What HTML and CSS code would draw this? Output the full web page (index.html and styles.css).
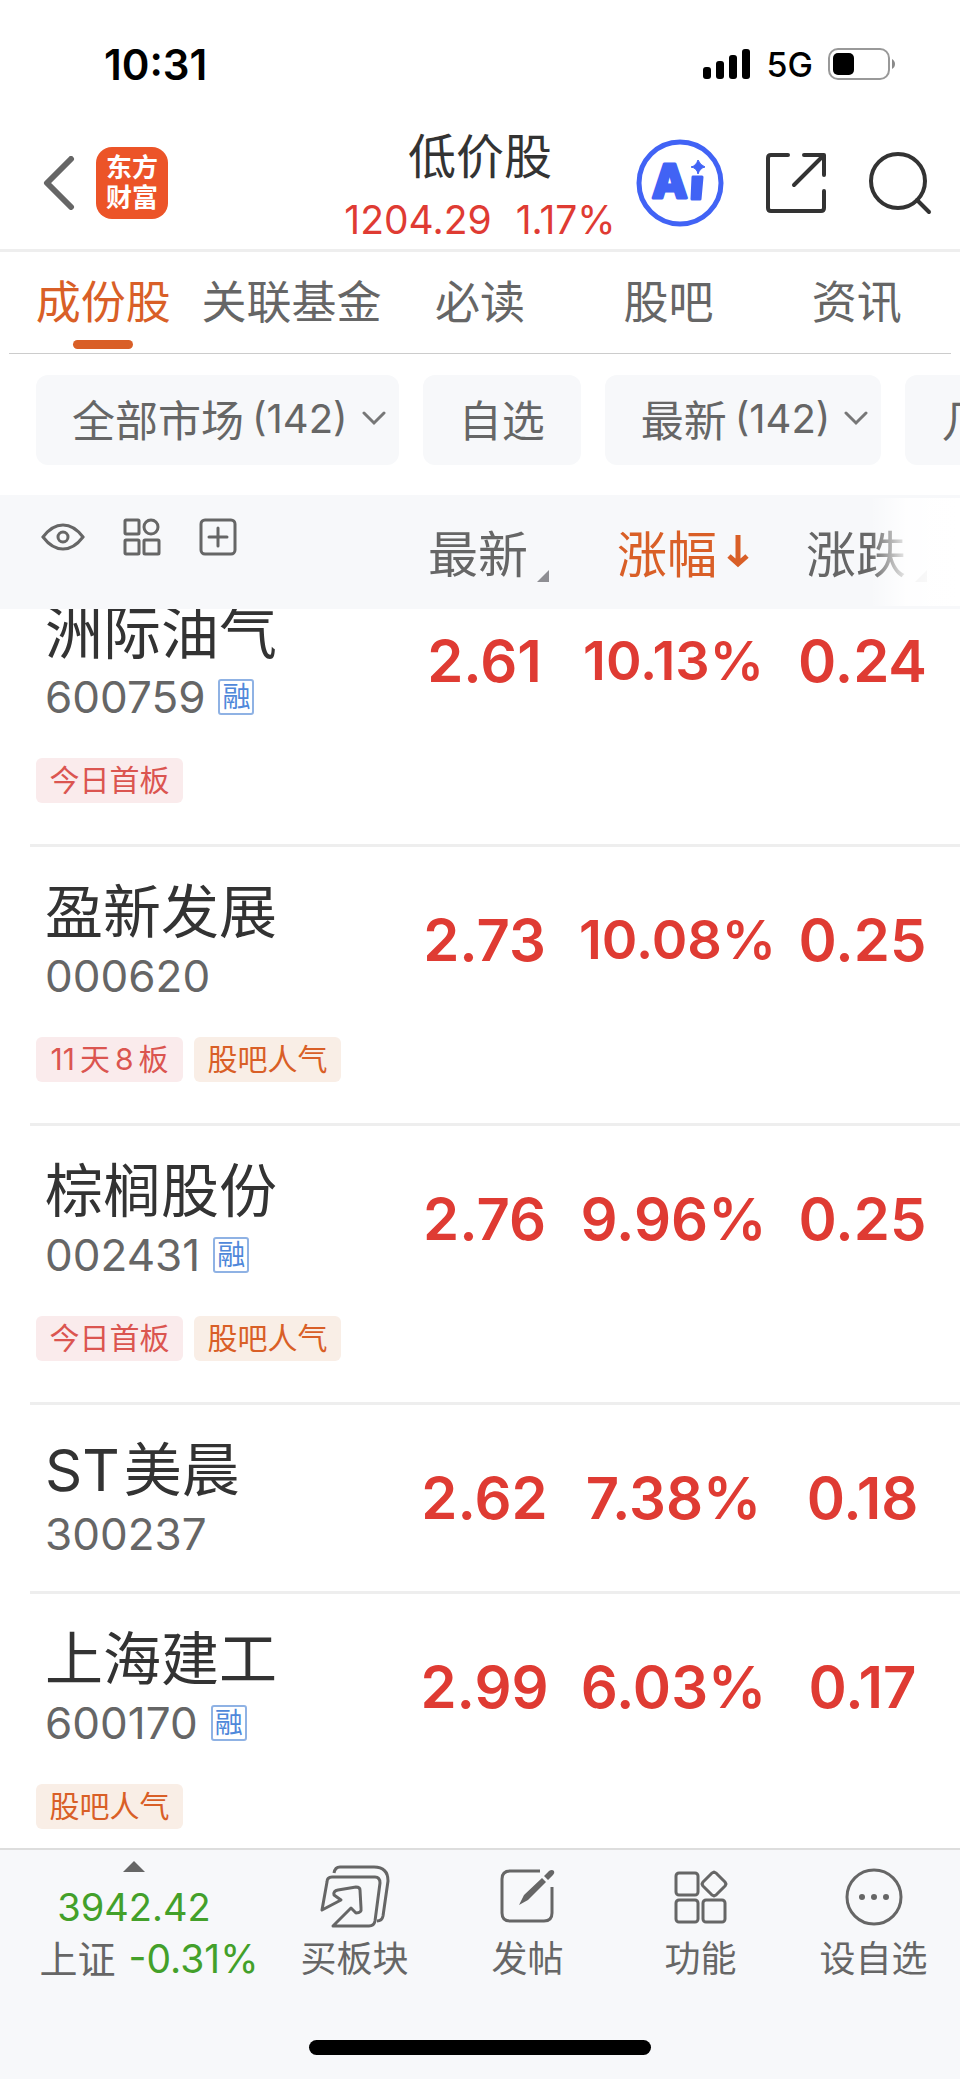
FILE: index.html
```html
<!DOCTYPE html>
<html lang="zh-CN">
<head>
<meta charset="utf-8">
<meta name="viewport" content="width=device-width, initial-scale=1">
<title>低价股</title>
<link rel="stylesheet" href="styles.css">
</head>
<body>
<div class="app">
  <div class="status">
    <span class="status-time">10:31</span>
    <div class="status-right">
      <svg class="signal" width="50" height="32" viewBox="0 0 50 32" aria-hidden="true">
        <rect x="1" y="19" width="8" height="12" rx="3"/><rect x="14" y="13" width="8" height="18" rx="3"/><rect x="27" y="7" width="8" height="24" rx="3"/><rect x="40" y="1" width="8" height="30" rx="3"/>
      </svg>
      <span class="network">5G</span>
      <svg class="battery" width="68" height="32" viewBox="0 0 68 32" aria-hidden="true">
        <rect x="1" y="1" width="60" height="30" rx="9" fill="none" stroke="#999" stroke-width="2"/>
        <rect x="5" y="5" width="21" height="22" rx="5"/>
        <path d="M64 11c4 2 4 8 0 10z" fill="#8a8a8a"/>
      </svg>
    </div>
  </div>

  <header class="header">
    <div class="header-side header-back">
      <button class="icon-btn" aria-label="返回">
        <svg width="32" height="54" viewBox="0 0 32 54"><path d="M28 3 4 27l24 24" fill="none" stroke="#666" stroke-width="6" stroke-linecap="round" stroke-linejoin="round"/></svg>
      </button>
      <a class="logo" href="#"><span>东方</span><span>财富</span></a>
    </div>
    <div class="header-title">
      <h1>低价股</h1>
      <p class="quote"><span>1204.29</span><span>1.17%</span></p>
    </div>
    <div class="header-side header-actions">
      <button class="icon-btn" aria-label="Ai">
        <svg width="88" height="88" viewBox="0 0 88 88">
          <circle cx="44" cy="44" r="41" fill="none" stroke="#4163f5" stroke-width="5"/>
          <g fill="#4163f5" stroke="#4163f5" stroke-width="3" stroke-linejoin="round">
            <text class="ai-text" x="16" y="59">A</text>
            <path d="m57 38h9l-2 22h-8z"/>
            <path d="M62 21q2 5 7 7-5 1-7 7-1-6-7-7 5-1 7-7z" stroke-width="1"/>
          </g>
        </svg>
      </button>
      <button class="icon-btn" aria-label="分享">
        <svg width="60" height="60" viewBox="0 0 60 60" fill="none" stroke="#333" stroke-width="4" stroke-linecap="round" stroke-linejoin="round"><path d="M22 2H5q-3 0-3 3v50q0 3 3 3h50q3 0 3-3V38M38 2h20v20M57 3 28 32"/></svg>
      </button>
      <button class="icon-btn" aria-label="搜索">
        <svg width="64" height="64" viewBox="0 0 64 64" fill="none" stroke="#333" stroke-width="4" stroke-linecap="round"><circle cx="30" cy="30" r="27"/><path d="m49 49 12 12"/></svg>
      </button>
    </div>
  </header>

  <nav class="tabs">
    <a class="tab active" href="#">成份股</a>
    <a class="tab" href="#">关联基金</a>
    <a class="tab" href="#">必读</a>
    <a class="tab" href="#">股吧</a>
    <a class="tab" href="#">资讯</a>
  </nav>

  <div class="chips">
    <button class="chip drop">全部市场<span>(142)</span><svg width="24" height="15" viewBox="0 0 24 15"><path d="m2 2 10 10L22 2"/></svg></button>
    <button class="chip">自选</button>
    <button class="chip drop">最新<span>(142)</span><svg width="24" height="15" viewBox="0 0 24 15"><path d="m2 2 10 10L22 2"/></svg></button>
    <button class="chip">几</button>
  </div>

  <main class="list">
    <table class="stocks">
      <thead>
        <tr>
          <th class="tools">
            <button class="icon-btn" aria-label="显示"><svg width="42" height="36" viewBox="0 0 42 36"><path d="M1 18C13 2 29 2 41 18 29 34 13 34 1 18z"/><circle cx="21" cy="18" r="5"/></svg></button>
            <button class="icon-btn" aria-label="布局"><svg width="36" height="36" viewBox="0 0 36 36"><rect x="1" y="1" width="14" height="14" rx="1"/><circle cx="27" cy="8" r="7"/><rect x="1" y="21" width="14" height="14" rx="1"/><rect x="20" y="21" width="15" height="14" rx="1"/></svg></button>
            <button class="icon-btn" aria-label="添加"><svg width="36" height="36" viewBox="0 0 36 36"><rect x="1" y="1" width="34" height="34" rx="4"/><path d="M18 9v18M9 18h18"/></svg></button>
          </th>
          <th><button class="sort">最新<i class="corner"></i></button></th>
          <th><button class="sort sorted">涨幅<svg width="22" height="34" viewBox="0 0 22 34"><path d="M11 1v29M2 22l9 8 9-8"/></svg></button></th>
          <th><button class="sort">涨跌<i class="corner"></i></button></th>
        </tr>
      </thead>
      <tbody>
        <tr>
          <td class="stock"><div class="name">洲际油气</div><div class="code">600759<span class="margin-badge">融</span></div><div class="tags"><span class="tag red">今日首板</span></div></td>
          <td class="num">2.61</td><td class="num small">10.13%</td><td class="num">0.24</td>
        </tr>
        <tr>
          <td class="stock"><div class="name">盈新发展</div><div class="code">000620</div><div class="tags"><span class="tag red spaced"><span>11</span><span>天</span><span>8</span><span>板</span></span><span class="tag orange">股吧人气</span></div></td>
          <td class="num">2.73</td><td class="num small">10.08%</td><td class="num">0.25</td>
        </tr>
        <tr>
          <td class="stock"><div class="name">棕榈股份</div><div class="code">002431<span class="margin-badge">融</span></div><div class="tags"><span class="tag red">今日首板</span><span class="tag orange">股吧人气</span></div></td>
          <td class="num">2.76</td><td class="num">9.96%</td><td class="num">0.25</td>
        </tr>
        <tr>
          <td class="stock"><div class="name"><span class="prefix">ST</span>美晨</div><div class="code">300237</div></td>
          <td class="num">2.62</td><td class="num">7.38%</td><td class="num">0.18</td>
        </tr>
        <tr>
          <td class="stock"><div class="name">上海建工</div><div class="code">600170<span class="margin-badge">融</span></div><div class="tags"><span class="tag orange">股吧人气</span></div></td>
          <td class="num">2.99</td><td class="num">6.03%</td><td class="num">0.17</td>
        </tr>
      </tbody>
    </table>
  </main>

  <footer class="footer">
    <div class="bar">
      <button class="index">
        <i class="up"></i>
        <span class="index-value">3942.42</span>
        <span class="index-change">上证<b>-0.31%</b></span>
      </button>
      <button class="action">
        <svg width="72" height="64" viewBox="0 0 72 64"><path d="M15 8q1-6 6-6h34q14 0 14 14l-5 35q-1 5-6 5M8 17q0-5 5-5h43q5 0 5 6l-5 38q-1 5-6 5H14L32 43l5 5q6 0 5-5l-1-18q0-3-4-3l-18 3q-5 1-4 5l7 5L3 45z"/></svg>
        <span>买板块</span>
      </button>
      <button class="action">
        <svg width="60" height="64" viewBox="0 0 60 64"><path d="M42 6H12Q4 6 4 14v34q0 8 8 8h34q8 0 8-8V22"/><path d="M21 40 26 30 44 13l4 4-18 18zM46 11l5-5q3-2 5 0 1 2-1 4l-5 5z" fill="#666" stroke="none"/></svg>
        <span>发帖</span>
      </button>
      <button class="action">
        <svg width="60" height="64" viewBox="0 0 60 64"><rect x="5" y="8" width="22" height="22" rx="3"/><path d="m41 8 2-1 2 1 9 9 1 2-1 2-9 9-2 1-2-1-9-9-1-2 1-2z"/><rect x="5" y="35" width="22" height="22" rx="3"/><rect x="32" y="35" width="22" height="22" rx="3"/></svg>
        <span>功能</span>
      </button>
      <button class="action">
        <svg width="60" height="64" viewBox="0 0 60 64"><circle cx="30" cy="32" r="27"/><g fill="#666" stroke="none"><circle cx="18" cy="32" r="3"/><circle cx="30" cy="32" r="3"/><circle cx="42" cy="32" r="3"/></g></svg>
        <span>设自选</span>
      </button>
    </div>
    <div class="home"></div>
  </footer>
</div>
</body>
</html>
```
FILE: styles.css
```css
* { box-sizing: border-box; }
body {
  margin: 0;
  background: #fff;
  color: #333;
  font-family: Inter, "Noto Sans CJK SC", sans-serif;
  font-weight: 400;
}
button {
  margin: 0;
  padding: 0;
  border: 0;
  background: none;
  color: inherit;
  font: inherit;
  white-space: nowrap;
}
a { color: inherit; text-decoration: none; }
svg { display: block; flex: none; }
h1, p { margin: 0; font-weight: inherit; }

.app {
  display: flex;
  flex-direction: column;
  min-height: 100vh;
  overflow: hidden;
}

.status {
  display: flex;
  align-items: center;
  justify-content: space-between;
  height: 128px;
  padding: 0 64px 0 104px;
  color: #000;
}
.status-time { font-size: 42px; font-weight: 600; }
.status-right { display: flex; align-items: center; gap: 15px; }
.network { font-size: 34px; font-weight: 500; }

.header {
  display: grid;
  grid-template-columns: 1fr auto 1fr;
  align-items: center;
  height: 124px;
  padding: 0 28px;
  border-bottom: 3px solid #eee;
}
.header-side { display: flex; align-items: center; padding-bottom: 12px; }
.header-back { gap: 21px; padding-left: 15px; }
.header-actions { justify-content: flex-end; gap: 42px; }
.header-title { text-align: center; }
.header-title h1 { margin-bottom: 6px; font-size: 48px; line-height: 56px; }
.quote {
  display: flex;
  justify-content: center;
  gap: 24px;
  color: #df3b33;
  font-size: 39px;
  line-height: 58px;
}
.logo {
  display: flex;
  flex-direction: column;
  justify-content: center;
  align-items: center;
  width: 72px;
  height: 72px;
  border-radius: 16px;
  background: #ec5428;
  color: #fff;
  font-size: 26px;
  font-weight: 700;
  line-height: 30px;
}
.ai-text { font-family: Inter, sans-serif; font-size: 46px; font-weight: 800; }

.tabs {
  display: grid;
  grid-template-columns: repeat(5, 1fr);
  height: 102px;
  margin: 0 9px;
  border-bottom: 1px solid #ccc;
  color: #666;
  font-size: 45px;
  line-height: 102px;
  text-align: center;
  white-space: nowrap;
}
.tab { position: relative; }
.active { color: #d95f27; }
.active::after {
  content: "";
  position: absolute;
  bottom: 5px;
  left: 50%;
  width: 60px;
  height: 9px;
  margin-left: -30px;
  border-radius: 5px;
  background: #d95f27;
}

.chips { display: flex; gap: 24px; padding: 21px 0 30px 36px; }
.chip {
  display: flex;
  flex: none;
  align-items: center;
  height: 90px;
  padding: 0 36px 4px;
  border-radius: 12px;
  background: #f7f8fa;
  color: #666;
  font-size: 43px;
}
.chip span { margin: 0 14px 0 8px; font-size: 40px; }
.drop { padding-right: 13px; }
.chip path { fill: none; stroke: #777; stroke-width: 3; stroke-linecap: round; }

.list { flex: 1; }
.stocks, .stocks thead, .stocks tbody { display: block; }
.stocks tr {
  display: grid;
  grid-template-columns: minmax(0, 1fr) repeat(3, 189px);
  padding-right: 3px;
}
.stocks th, .stocks td { padding: 0; font-weight: 400; }
.stocks thead {
  position: relative;
  z-index: 1;
  background: #f7f8fa;
}
.stocks thead::after {
  content: "";
  position: absolute;
  top: 3px;
  right: 0;
  bottom: 3px;
  width: 90px;
  background: linear-gradient(to right, rgba(255, 255, 255, 0), rgba(255, 255, 255, .9) 38px, #fff);
}
.stocks thead tr { height: 114px; }
.stocks .tools { display: flex; align-items: flex-start; gap: 40px; padding: 24px 0 0 42px; }
.tools svg { fill: none; stroke: #666; stroke-width: 3; stroke-linecap: round; overflow: visible; }
.sort {
  display: flex;
  align-items: center;
  width: 100%;
  height: 114px;
  padding: 0 0 2px 38px;
  color: #666;
  font-size: 50px;
}
.corner {
  align-self: flex-end;
  margin: 0 0 25px 9px;
  border-bottom: 12px solid #8e8e93;
  border-left: 12px solid transparent;
}
.sorted { color: #d95f27; }
.sorted svg { margin-left: 10px; fill: none; stroke: #d95f27; stroke-width: 5; }

/* The list is scrolled a little way under its header. */
.stocks tbody { margin-top: -41px; }
.stocks tbody tr { position: relative; padding-bottom: 3px; }
.stocks tbody tr:not(:last-child)::after {
  content: "";
  position: absolute;
  right: 0;
  bottom: 0;
  left: 30px;
  height: 3px;
  background: #eee;
}
.stocks .stock { min-height: 186px; padding: 28px 0 0 36px; }
.name { padding: 1px 0 0 9px; font-size: 58px; line-height: 72px; }
.prefix { margin-right: 4px; }
.code {
  display: flex;
  align-items: center;
  gap: 13px;
  height: 56px;
  padding-left: 9px;
  color: #666;
  font-size: 44px;
}
.margin-badge {
  width: 36px;
  height: 36px;
  border: 2px solid #8fb2e4;
  border-radius: 3px;
  color: #4f88da;
  font-size: 28px;
  line-height: 32px;
  text-align: center;
}
.tags { display: flex; gap: 11px; padding: 33px 0 41px; }
.stocks tr:last-child .tags { padding-bottom: 16px; }
.tag {
  width: 147px;
  height: 45px;
  border-radius: 6px;
  font-size: 30px;
  line-height: 45px;
  text-align: center;
  white-space: nowrap;
}
.spaced { display: flex; justify-content: center; gap: 5px; }
.red { background: #faebec; color: #db5550; }
.orange { background: #f9eee6; color: #d95f27; }
.stocks .num {
  padding-top: 57px;
  color: #df3b33;
  font-size: 58px;
  font-weight: 600;
  line-height: 72px;
  text-align: center;
}
.stocks .small { font-size: 54px; }

.footer {
  border-top: 2px solid #ddd;
  background: #f7f8fa;
  color: #666;
}
.bar { display: grid; grid-template-columns: 268px repeat(4, 1fr); padding-top: 11px; }
.index { display: flex; flex-direction: column; align-items: center; font-size: 38px; }
.up {
  border-right: 11px solid transparent;
  border-bottom: 11px solid #666;
  border-left: 11px solid transparent;
}
.index-value { margin-top: 9px; color: #43a02a; line-height: 52px; }
.index-change { padding-left: 30px; line-height: 52px; }
.index-change b { margin-left: 13px; color: #43a02a; font-size: 39px; font-weight: 400; }
.action {
  display: flex;
  flex-direction: column;
  align-items: center;
  padding-top: 4px;
  font-size: 36px;
  line-height: 52px;
}
.action svg { margin-bottom: 4px; fill: none; stroke: #666; stroke-width: 3; stroke-linejoin: round; }
.home {
  width: 342px;
  height: 15px;
  margin: 55px auto 24px;
  border-radius: 8px;
  background: #000;
}
```
